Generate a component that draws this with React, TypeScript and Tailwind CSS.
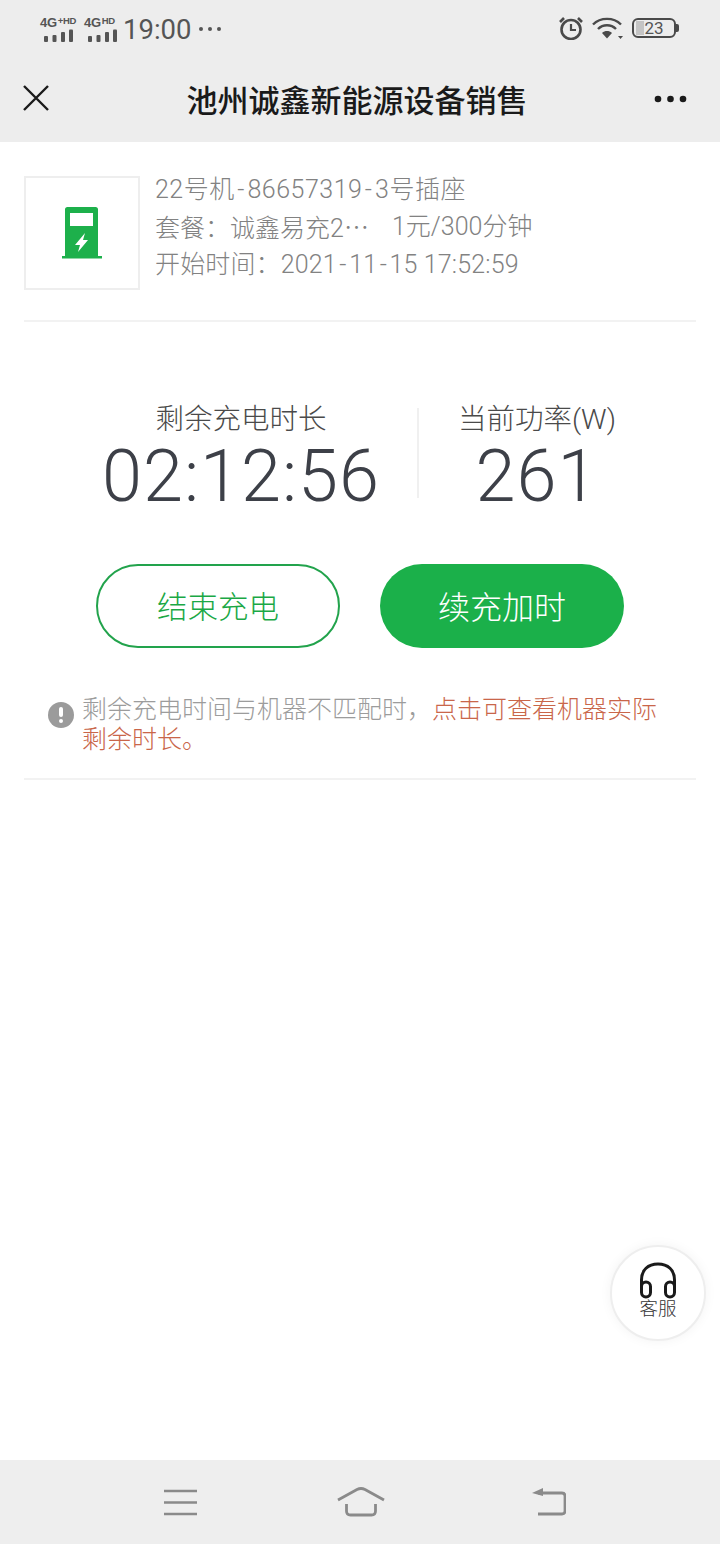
import React from "react";

const font = { fontFamily: '"Roboto","Noto Sans CJK SC",sans-serif' };
const cjk = { fontFamily: '"Noto Sans CJK SC",sans-serif' };

function Signal({ label, sup }: { label: string; sup: string }) {
  return (
    <div className="flex flex-col items-start w-[38px]">
      <div className="flex items-start h-[13px] text-[#555] font-bold leading-[13px] text-[13px] tracking-[-0.3px]" style={{ fontFamily: '"Liberation Sans",sans-serif' }}>
        <span>{label}</span>
        <span className="text-[9.5px] leading-[10px] ml-[1px]">{sup}</span>
      </div>
      <svg width="30" height="14" viewBox="0 0 30 14" className="ml-[3px]">
        <rect x="1" y="7" width="4" height="6" rx="1" fill="#555" />
        <rect x="9.500" y="6" width="4" height="7" rx="1" fill="#555" />
        <rect x="18" y="3" width="4" height="10" rx="1" fill="#555" />
        <rect x="26" y="0.500" width="4" height="12.500" rx="1" fill="#555" />
      </svg>
    </div>
  );
}

function StatusBar() {
  return (
    <div className="h-[56px] flex items-center justify-between pl-[40px] pr-[40px]">
      <div className="flex items-center gap-[6px] pt-[2px]">
        <Signal label="4G" sup="+HD" />
        <Signal label="4G" sup="HD" />
        <span className="text-[27.5px] text-[#555] leading-none -ml-[5px] mt-[1px]">19:00</span>
        <svg width="24" height="6" viewBox="0 0 24 6" className="ml-[1px] mb-[1px]">
          <circle cx="3" cy="3" r="2" fill="#555" />
          <circle cx="12" cy="3" r="2" fill="#555" />
          <circle cx="21" cy="3" r="2" fill="#555" />
        </svg>
      </div>
      <div className="flex items-center gap-[9px]">
        <svg width="24" height="24" viewBox="0 0 24 24" fill="none" stroke="#4a4a4a">
          <circle cx="12" cy="13.5" r="9.5" strokeWidth="2.6" />
          <path d="M12 8v6h5" strokeWidth="2.2" />
          <path d="M1 6l4-4M23 6l-4-4" strokeWidth="2.6" />
        </svg>
        <svg width="32" height="24" viewBox="0 0 32 24" fill="none">
          <path d="M1 8.5C8.5 1 21.5 1 29 8.5" stroke="#4a4a4a" strokeWidth="2.4" />
          <path d="M6 13C11 8 19 8 24 13" stroke="#4a4a4a" strokeWidth="2.4" />
          <path d="M10 17c3-2.6 7-2.6 10 0l-5 5.5z" fill="#4a4a4a" />
          <path d="M26 20h5l-2.500 3z" fill="#4a4a4a" />
        </svg>
        <div className="flex items-center -ml-[1px] mr-[1px]">
          <div className="relative w-[44px] h-[20px] rounded-[6px] border-[2px] border-[#4a4a4a] overflow-hidden flex items-center justify-center">
            <div className="absolute left-[2px] top-[1px] bottom-[1px] w-[8px] bg-[#c4c4c4]" />
            <span className="relative text-[17px] leading-none text-[#555]">23</span>
          </div>
          <div className="w-[3px] h-[8px] bg-[#4a4a4a] rounded-r-[2px]" />
        </div>
      </div>
    </div>
  );
}

function NavBar() {
  return (
    <div className="h-[86px] flex items-center justify-between pl-[22px] pr-[33px]">
      <svg width="28" height="28" viewBox="0 0 28 28" stroke="#1a1a1a" strokeWidth="2.4" fill="none" className="mb-[2px]">
        <path d="M2 2l24 24M26 2L2 26" />
      </svg>
      <div className="text-[31px] font-medium text-[#1a1a1a] leading-none ml-[10px] mb-[2px]" style={cjk}>
        池州诚鑫新能源设备销售
      </div>
      <svg width="33" height="8" viewBox="0 0 33 8" fill="#1a1a1a">
        <circle cx="4" cy="4" r="3.300" />
        <circle cx="16.500" cy="4" r="3.300" />
        <circle cx="29" cy="4" r="3.300" />
      </svg>
    </div>
  );
}

function Hy() {
  return <span className="mx-[2.5px]">-</span>;
}

function Info() {
  return (
    <div className="mx-[24px] pt-[34px] pb-[30px] border-b-2 border-[#f2f2f2] flex">
      <div className="w-[116px] h-[114px] border-2 border-[#eeeeee] flex items-center justify-center">
        <svg width="42" height="54" viewBox="0 0 42 54">
          <path d="M4 3.500a2.500 2.500 0 0 1 2.500-2.500h28a2.500 2.500 0 0 1 2.500 2.500V51H4z" fill="#1db04b" />
          <rect x="1" y="50" width="40" height="2.500" fill="#1db04b" />
          <rect x="9" y="7" width="23" height="13" fill="#fff" />
          <path d="M24 27L14 39h5l-2 7 10-12h-5z" fill="#fff" />
        </svg>
      </div>
      <div className="ml-[15px] text-[25px] leading-[37px] text-[#828282] -mt-[5px] font-light">
        <div className="tracking-[0.5px]">22号机<Hy />86657319<Hy />3号插座</div>
        <div className="flex">
          <span className="w-[237px]">套餐：诚鑫易充2<span style={cjk}>…</span></span>
          <span>1元/300分钟</span>
        </div>
        <div className="tracking-[0.15px] -mt-[1.5px]">开始时间：2021<Hy />11<Hy />15 17:52:59</div>
      </div>
    </div>
  );
}

function Stat({ label, value }: { label: string; value: string }) {
  return (
    <div className="flex flex-col items-center">
      <div className="text-[28.5px] leading-[32px] text-[#4a4a4a] whitespace-nowrap font-light">{label}</div>
      <div className="text-[72px] leading-[80px] text-[#3d4048] mt-[1px] whitespace-nowrap font-light tracking-[1px]">{value}</div>
    </div>
  );
}

function Stats() {
  return (
    <div className="flex mt-[82px] pl-[65px]">
      <div className="w-[352px]">
        <Stat label="剩余充电时长" value="02:12:56" />
      </div>
      <div className="w-[2px] h-[90px] mt-[4px] bg-[#f0f0f0]" />
      <div className="w-[236px]">
        <Stat label="当前功率(W)" value="261" />
      </div>
    </div>
  );
}

function Buttons() {
  return (
    <div className="flex justify-center gap-[40px] mt-[47px] font-light">
      <div className="w-[244px] h-[84px] pt-[3px] rounded-full border-2 border-[#22a34c] text-[#1aa845] text-[30.500px] flex items-center justify-center">结束充电</div>
      <div className="w-[244px] h-[84px] pt-[3px] rounded-full bg-[#1bb04a] text-white text-[32px] flex items-center justify-center">续充加时</div>
    </div>
  );
}

function Hint() {
  return (
    <div className="mx-[24px] mt-[47px] pl-[24px] pb-[23px] border-b-2 border-[#f2f2f2] flex">
      <svg width="26" height="26" viewBox="0 0 26 26" className="mt-[7px] shrink-0">
        <circle cx="13" cy="13" r="13" fill="#9b9b9b" />
        <rect x="11" y="5" width="4" height="10" rx="2" fill="#fff" />
        <circle cx="13" cy="19" r="2" fill="#fff" />
      </svg>
      <div className="ml-[8px] w-[590px] text-[25px] leading-[30px] text-[#9c9c9c] font-light">
        <div>剩余充电时间与机器不匹配时，<span className="text-[#c9664a]">点击可查看机器实际</span></div>
        <div className="text-[#c9664a]">剩余时长。</div>
      </div>
    </div>
  );
}

function Service() {
  return (
    <div className="absolute right-[14px] top-[1245px] w-[96px] h-[96px] rounded-full bg-white border-2 border-[#eeeeee] flex flex-col items-center shadow-[0_0_12px_rgba(0,0,0,0.05)]">
      <svg width="38" height="37" viewBox="0 0 38 37" fill="none" stroke="#1a1a1a" strokeWidth="3" className="mt-[15px]">
        <path d="M2.500 28V18C2.500 8 9 2 19 2s16.500 6 16.500 16v10" />
        <rect x="2.500" y="20" width="9" height="15" rx="4.500" />
        <rect x="26.500" y="20" width="9" height="15" rx="4.500" />
      </svg>
      <div className="text-[18.500px] leading-[20px] text-[#333] font-light">客服</div>
    </div>
  );
}

function BottomBar() {
  return (
    <div className="h-[84px] bg-[#eeeeee] flex items-center justify-between pl-[164px] pr-[154px]">
      <svg width="33" height="27" viewBox="0 0 33 27" stroke="#8a8a8a" strokeWidth="2.600" fill="none">
        <path d="M0 2h33M0 13.500h33M0 25h33" />
      </svg>
      <svg width="48" height="30" viewBox="0 0 48 30" stroke="#8a8a8a" strokeWidth="2.800" fill="none" className="mr-[8px]">
        <path d="M1 13L20 2.500q4-2 8 0L47 13" />
        <path d="M9.500 17v7q0 4 4 4h21q4 0 4-4v-7" />
      </svg>
      <svg width="34" height="28" viewBox="0 0 34 28" fill="none">
        <path d="M6 5h24q3 0 3 3v15q0 3-3 3H6" stroke="#8a8a8a" strokeWidth="2.800" />
        <path d="M0 5l11-5v8z" fill="#8a8a8a" />
      </svg>
    </div>
  );
}

export default function App() {
  return (
    <div className="relative w-[720px] h-[1544px] bg-white flex flex-col overflow-hidden" style={font}>
      <div className="h-[142px] bg-[#ededed]">
        <StatusBar />
        <NavBar />
      </div>
      <div className="flex-1">
        <Info />
        <Stats />
        <Buttons />
        <Hint />
      </div>
      <Service />
      <BottomBar />
    </div>
  );
}
